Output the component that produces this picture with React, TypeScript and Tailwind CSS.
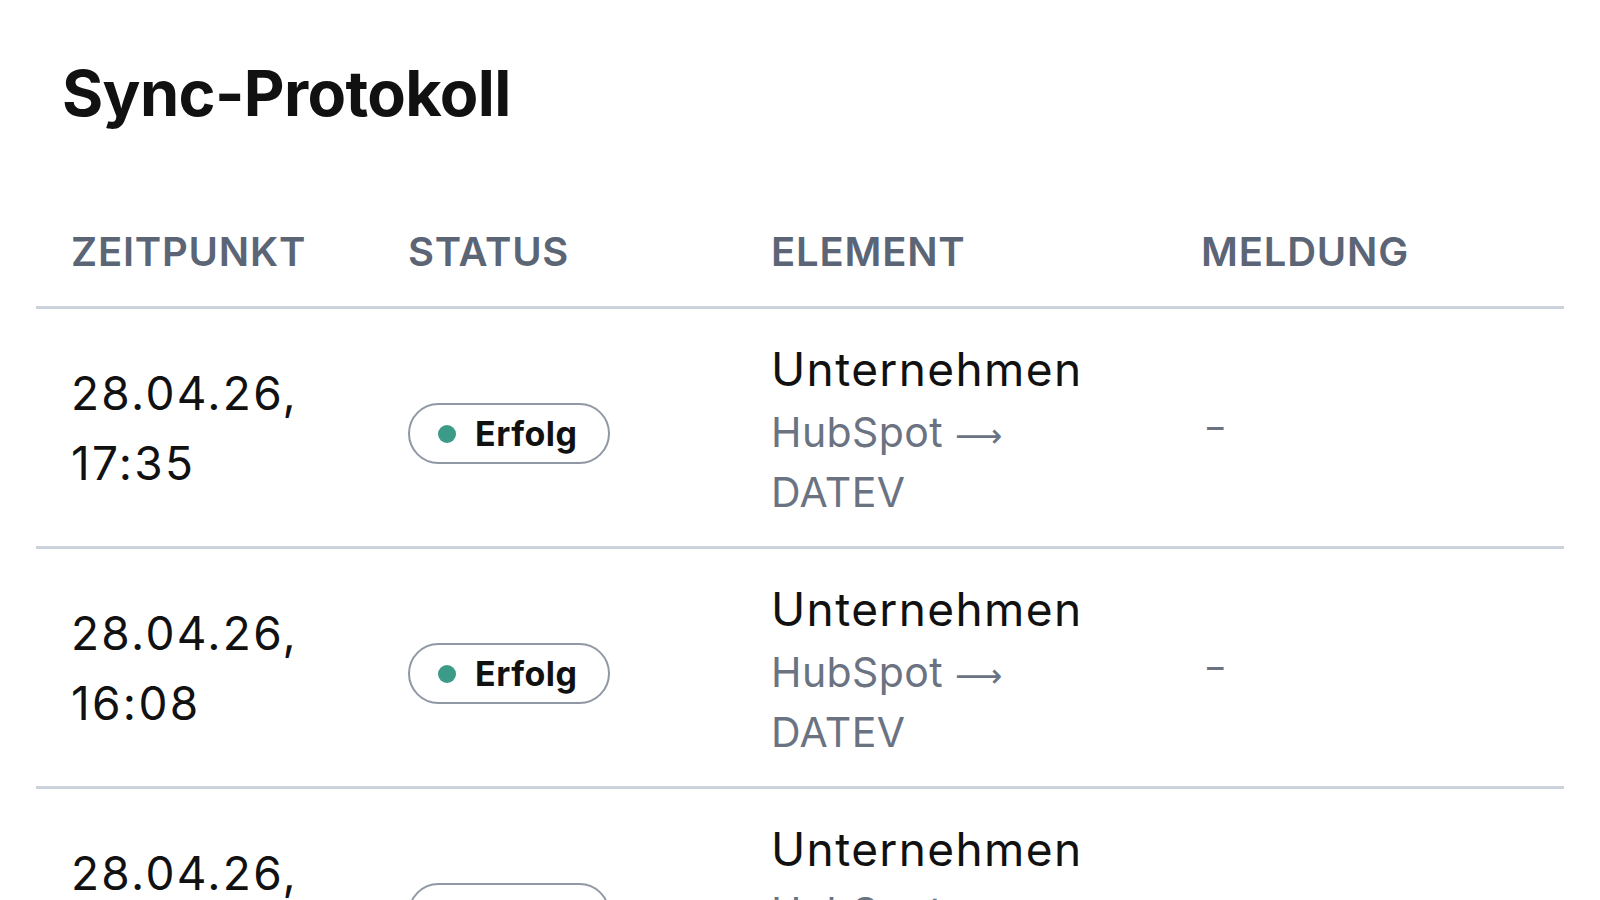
import React from 'react';

const rows = [
  { date: '28.04.26,', time: '17:35' },
  { date: '28.04.26,', time: '16:08' },
  { date: '28.04.26,', time: '15:42' },
];

function StatusBadge() {
  return (
    <span className="mt-3 inline-flex h-[61px] w-[202px] items-center gap-[19px] rounded-full border-2 border-[#8f98a4] pl-[28px]">
      <span className="h-[18px] w-[18px] rounded-full bg-[#3c9a89]" />
      <span className="text-[34px] font-bold leading-none tracking-[0.015em] text-[#111]">Erfolg</span>
    </span>
  );
}

export default function App() {
  return (
    <main className="min-h-screen w-full bg-white px-[36px] font-['Inter','Noto_Sans',sans-serif] text-[#111]">
      <h1 className="ml-[26px] pt-[62px] text-[63px] font-bold leading-none tracking-[-0.01em]">
        Sync-Protokoll
      </h1>

      <div className="mt-[73px] w-full">
        <div className="grid grid-cols-[337px_363px_430px_1fr] border-b-[3px] border-[#cbd3dc] pb-[24px] pt-[24px] text-[40px] font-semibold uppercase leading-[60px] tracking-[0.02em] text-[#5b6576]">
          <div className="pl-[35px]">Zeitpunkt</div>
          <div className="pl-[35px]">Status</div>
          <div className="pl-[35px]">Element</div>
          <div className="pl-[35px]">Meldung</div>
        </div>

        {rows.map((row, index) => (
          <div
            key={index}
            className="grid h-[240px] grid-cols-[337px_363px_430px_1fr] items-center border-b-[3px] border-[#cbd3dc]"
          >
            <div className="pl-[35px] text-[46px] leading-[70px] tracking-[0.05em]">
              <div>{row.date}</div>
              <div>{row.time}</div>
            </div>
            <div className="pl-[35px]">
              <StatusBadge />
            </div>
            <div className="pl-[35px]">
              <div className="text-[46px] leading-[69px] tracking-[0.03em]">Unternehmen</div>
              <div className="text-[41px] leading-[56px] tracking-[0.01em] text-[#6b7382]">
                HubSpot <span className="font-['DejaVu_Sans',sans-serif] text-[33px]">⟶</span>
                <br />
                DATEV
              </div>
            </div>
            <div className="pl-[41px] text-[33px] font-medium text-[#6b7382]">–</div>
          </div>
        ))}
      </div>
    </main>
  );
}
